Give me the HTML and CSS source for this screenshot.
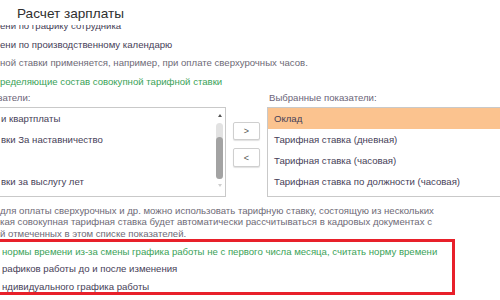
FILE: index.html
```html
<!DOCTYPE html>
<html lang="ru">
<head>
  <meta charset="UTF-8" />
  <title>Расчет зарплаты</title>
  <link rel="stylesheet" href="styles.css">
</head>
<body>
  <header class="title-bar">
    <h1>Расчет зарплаты</h1>
  </header>

  <div class="form">
    <div class="form-inner">
      <p class="line">ени по графику сотрудника</p>
      <p class="line">ени по производственному календарю</p>
      <p class="line hint">ной ставки применяется, например, при оплате сверхурочных часов.</p>
      <p class="line accent">ределяющие состав совокупной тарифной ставки</p>

      <div class="picker">
        <div class="picker-col picker-left">
          <div class="picker-label">затели:</div>
          <div class="listbox">
            <div class="rows">
              <div class="row">и квартплаты</div>
              <div class="row">вки За наставничество</div>
              <div class="row"></div>
              <div class="row">вки за выслугу лет</div>
            </div>
            <div class="scrollbar">
              <span class="arrow-up"></span>
              <span class="track"><span class="thumb"></span></span>
              <span class="arrow-down"></span>
            </div>
          </div>
        </div>

        <div class="picker-buttons">
          <button class="move-btn">&gt;</button>
          <button class="move-btn">&lt;</button>
        </div>

        <div class="picker-col picker-right">
          <div class="picker-label">Выбранные показатели:</div>
          <div class="listbox">
            <div class="rows">
              <div class="row selected">Оклад</div>
              <div class="row">Тарифная ставка (дневная)</div>
              <div class="row">Тарифная ставка (часовая)</div>
              <div class="row">Тарифная ставка по должности (часовая)</div>
            </div>
          </div>
        </div>
      </div>

      <p class="notes">
        для оплаты сверхурочных и др. можно использовать тарифную ставку, состоящую из нескольких<br>
        кая совокупная тарифная ставка будет автоматически рассчитываться в кадровых документах с<br>
        й отмеченных в этом списке показателей.
      </p>

      <div class="marked">
        <p class="marked-line accent">нормы времени из-за смены графика работы не с первого числа месяца, считать норму времени</p>
        <p class="marked-line">рафиков работы до и после изменения</p>
        <p class="marked-line">ндивидуального графика работы</p>
      </div>
    </div>
  </div>
</body>
</html>
```

FILE: styles.css
```css
body {
  margin: 0;
  width: 500px;
  height: 300px;
  overflow: hidden;
  background: #fff;
  font-family: "Liberation Sans", Arial, sans-serif;
  font-size: 9.6px;
  color: #463e57;
}
.title-bar {
  height: 25px;
  background: #fff;
}
.title-bar h1 {
  margin: 0;
  padding: 6px 0 0 17px;
  font-size: 13.6px;
  font-weight: normal;
  line-height: 16px;
  color: #2f2f2f;
  white-space: nowrap;
}
.form {
  height: 275px;
  overflow: hidden;
}
.form-inner {
  margin-top: -8px;
}
.line {
  margin: 0;
  line-height: 18.5px;
  white-space: nowrap;
}
.hint {
  color: #6e6a76;
}
.accent {
  color: #3aa257;
}
.picker {
  display: flex;
}
.picker-col,
.picker-buttons {
  flex-shrink: 0;
}
.picker-label {
  line-height: 14px;
  color: #6b6478;
  white-space: nowrap;
}
.listbox {
  display: flex;
  margin-top: 2px;
  height: 88px;
  border: 1px solid #c9c9c9;
  background: #fff;
}
.rows {
  flex: 1;
}
.row {
  height: 21px;
  line-height: 21px;
  white-space: nowrap;
}
.picker-left {
  width: 228px;
  margin-left: -2px;
}
.picker-left .row {
  padding-left: 2px;
}
.scrollbar {
  width: 11px;
  display: flex;
  flex-direction: column;
  align-items: center;
}
.arrow-up,
.arrow-down {
  width: 0;
  height: 0;
  border-left: 2.5px solid transparent;
  border-right: 2.5px solid transparent;
}
.arrow-up {
  margin-top: 6px;
  border-bottom: 3px solid #555;
}
.arrow-down {
  margin-top: 5px;
  border-top: 3px solid #cfcfcf;
}
.track {
  margin-top: 6px;
  width: 7px;
  height: 56px;
  border-radius: 4px;
  background: #e2e2e2;
  display: flex;
  flex-direction: column;
  justify-content: flex-end;
}
.thumb {
  height: 42px;
  border-radius: 4px;
  background: #a3a3a3;
}
.picker-buttons {
  display: flex;
  flex-direction: column;
  gap: 8px;
  width: 27px;
  margin-left: 7px;
  padding-top: 31px;
}
.move-btn {
  height: 18px;
  padding: 0;
  border: 1px solid #cfcfcf;
  border-radius: 2px;
  background: #fff;
  box-shadow: 0 1px 1px rgba(0, 0, 0, 0.12);
  font-family: "Liberation Sans", Arial, sans-serif;
  font-size: 9px;
  color: #555;
}
.move-btn + .move-btn {
  height: 19px;
}
.picker-right {
  width: 260px;
  margin-left: 7px;
}
.picker-right .picker-label {
  padding-left: 2px;
}
.picker-right .row {
  padding-left: 6px;
}
.selected {
  background: #fbc38f;
}
.notes {
  margin: 8px 0 0;
  line-height: 11.3px;
  white-space: nowrap;
  color: #6e6a76;
}
.marked {
  margin: 0 0 0 -10px;
  width: 450px;
  height: 49px;
  padding: 1px 0 0 9px;
  border: 3px solid #e8202a;
}
.marked-line {
  margin: 0;
  line-height: 17.5px;
  white-space: nowrap;
}
```
